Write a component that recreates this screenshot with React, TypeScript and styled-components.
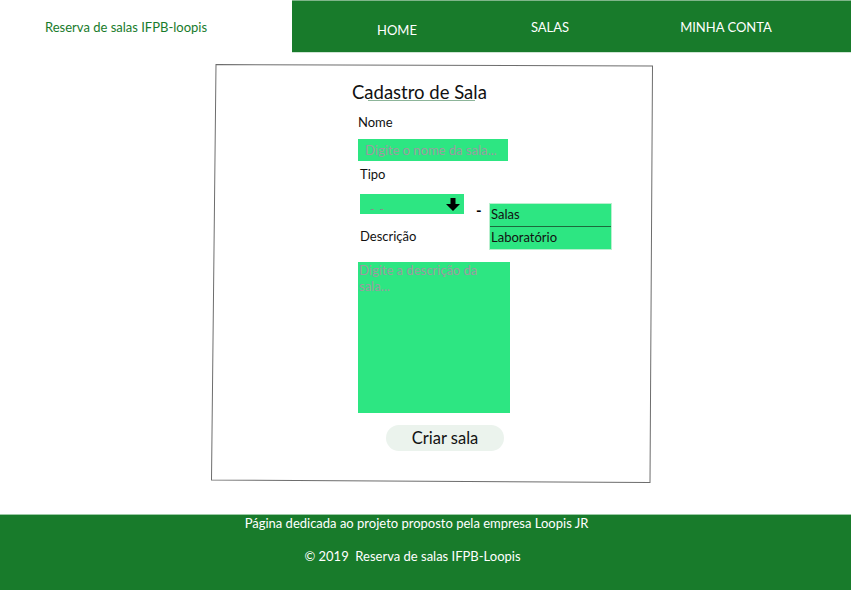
import React from 'react';
import styled, { createGlobalStyle } from 'styled-components';

const GlobalStyle = createGlobalStyle`
  body {
    margin: 0;
    font-family: Lato, 'Open Sans', sans-serif;
    background: #ffffff;
  }
`;

const green = '#187b2b';
const fieldGreen = '#2de682';

const Page = styled.div`
  display: flex;
  flex-direction: column;
  width: 851px;
  height: 590px;
`;

const Header = styled.header`
  display: flex;
  height: 53px;
`;

const Brand = styled.div`
  width: 292px;
  display: flex;
  align-items: center;
  padding-left: 45px;
  box-sizing: border-box;
  color: ${green};
  font-size: 13px;
`;

const Nav = styled.nav`
  flex: 1;
  display: flex;
  align-items: center;
  padding-left: 85px;
  background: ${green};
  border-top: 1px solid #7fb58a;
  border-bottom: 1px solid #cfe5d4;
`;

const NavItem = styled.a<{ $drop?: number; $space?: number }>`
  color: #ffffff;
  font-size: 13px;
  text-decoration: none;
  margin-top: ${(p) => p.$drop ?? 0}px;
  margin-left: ${(p) => p.$space ?? 0}px;
`;

const Main = styled.main`
  flex: 1;
  padding: 11px 0 0 211px;
`;

const Card = styled.section`
  position: relative;
  width: 442px;
  box-sizing: border-box;
  padding: 17px 0 32px 147px;
`;

const Sketch = styled.svg`
  position: absolute;
  inset: 0;
  width: 100%;
  height: 100%;
  pointer-events: none;
`;

const Title = styled.h1`
  margin: 0 0 13px -6px;
  font-size: 18.5px;
  font-weight: 400;
  line-height: 22px;
  color: #111;
  &::after {
    content: '';
    display: block;
    width: 107px;
    height: 1px;
    margin: -3px 0 0 16px;
    background: #8db59a;
  }
`;

const Label = styled.label<{ $indent?: number }>`
  display: block;
  font-size: 13px;
  line-height: 16px;
  color: #111;
  padding-left: ${(p) => p.$indent ?? 0}px;
`;

const TextInput = styled.input`
  display: block;
  width: 150px;
  height: 22px;
  box-sizing: border-box;
  margin: 9px 0 5px;
  padding: 0 7px;
  border: none;
  background: ${fieldGreen};
  font-family: Lato, sans-serif;
  font-size: 13px;
  &::placeholder {
    color: #9d9aa0;
  }
`;

const SelectRow = styled.div`
  position: relative;
  margin: 12px 0 14px 2px;
  width: 104px;
`;

const SelectBox = styled.div`
  height: 20px;
  display: flex;
  align-items: center;
  justify-content: space-between;
  padding: 0 4px 0 10px;
  background: ${fieldGreen};
  color: #8a8a8a;
  font-size: 12px;
`;

const Placeholder = styled.span`
  padding-top: 8px;
  letter-spacing: 1px;
`;

const Dash = styled.span`
  position: absolute;
  left: 116px;
  top: 7px;
  font-size: 15px;
  font-weight: 700;
  color: #000;
`;

const Menu = styled.ul`
  position: absolute;
  left: 129px;
  top: 9px;
  width: 123px;
  margin: 0;
  padding: 0;
  list-style: none;
  background: ${fieldGreen};
  border: 1px solid #b9f0cf;
  box-sizing: border-box;
`;

const MenuItem = styled.li<{ $divided?: boolean }>`
  height: 22px;
  line-height: 21px;
  padding-left: 1px;
  font-size: 13px;
  color: #111;
  border-top: ${(p) => (p.$divided ? '1px solid #1c6a3c' : 'none')};
`;

const TextArea = styled.textarea`
  display: block;
  width: 152px;
  height: 151px;
  box-sizing: border-box;
  margin: 18px 0 12px;
  padding: 0 0 0 1px;
  border: none;
  resize: none;
  background: ${fieldGreen};
  font-family: Lato, sans-serif;
  font-size: 13px;
  line-height: 16px;
  &::placeholder {
    color: #9d9aa0;
  }
`;

const Button = styled.button`
  display: block;
  margin-left: 28px;
  width: 118px;
  height: 26px;
  border: none;
  border-radius: 13px;
  background: #ebf3ed;
  font-family: Lato, sans-serif;
  font-size: 16.5px;
  color: #111;
`;

const Footer = styled.footer`
  height: 76px;
  background: ${green};
  border-top: 1px solid #9ccaa6;
  box-sizing: border-box;
  display: flex;
  flex-direction: column;
  align-items: center;
  color: #ffffff;
  padding: 1px 18px 0 0;
  gap: 18px;
`;

const FooterLine = styled.p<{ $shift?: number }>`
  margin: 0;
  line-height: 15px;
  font-size: 13px;
  margin-right: ${(p) => p.$shift ?? 0}px;
`;

const ArrowDown = () => (
  <svg width="14" height="13" viewBox="0 0 14 13">
    <polygon points="4.5,0 9.5,0 9.5,6 14,6 7,13 0,6 4.5,6" fill="#000" />
  </svg>
);

export default function App() {
  return (
    <Page>
      <GlobalStyle />
      <Header>
        <Brand>Reserva de salas IFPB-loopis</Brand>
        <Nav>
          <NavItem $drop={6}>HOME</NavItem>
          <NavItem $space={114}>SALAS</NavItem>
          <NavItem $space={111}>MINHA CONTA</NavItem>
        </Nav>
      </Header>
      <Main>
        <Card>
          <Sketch viewBox="0 0 442 422" preserveAspectRatio="none">
            <polygon
              points="5,0.5 441.5,2 439,421.5 0.5,419"
              fill="none"
              stroke="#6d6d6d"
              strokeWidth="1"
              vectorEffect="non-scaling-stroke"
            />
          </Sketch>
          <Title>Cadastro de Sala</Title>
          <Label>Nome</Label>
          <TextInput placeholder="Digite o nome da sala..." />
          <Label $indent={2}>Tipo</Label>
          <SelectRow>
            <SelectBox>
              <Placeholder>- -</Placeholder>
              <ArrowDown />
            </SelectBox>
            <Dash>-</Dash>
            <Menu>
              <MenuItem>Salas</MenuItem>
              <MenuItem $divided>Laboratório</MenuItem>
            </Menu>
          </SelectRow>
          <Label $indent={2}>Descrição</Label>
          <TextArea placeholder="Digite a descrição da sala..." />
          <Button>Criar sala</Button>
        </Card>
      </Main>
      <Footer>
        <FooterLine>Página dedicada ao projeto proposto pela empresa Loopis JR</FooterLine>
        <FooterLine $shift={8}>© 2019&nbsp; Reserva de salas IFPB-Loopis</FooterLine>
      </Footer>
    </Page>
  );
}
